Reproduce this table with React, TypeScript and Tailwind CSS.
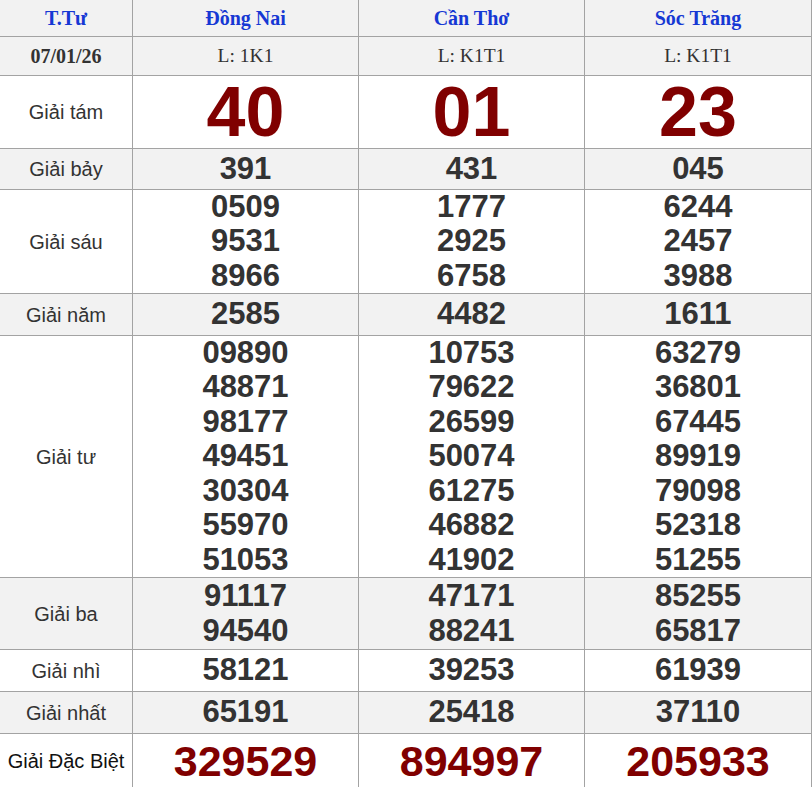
const provinces = [
  { name: 'Đồng Nai', code: 'L: 1K1' },
  { name: 'Cần Thơ', code: 'L: K1T1' },
  { name: 'Sóc Trăng', code: 'L: K1T1' },
]

type Prize = {
  label: string
  values: string[][]
  kind?: 'big' | 'special'
  shaded?: boolean
}

const prizes: Prize[] = [
  { label: 'Giải tám', values: [['40'], ['01'], ['23']], kind: 'big' },
  { label: 'Giải bảy', values: [['391'], ['431'], ['045']], shaded: true },
  {
    label: 'Giải sáu',
    values: [
      ['0509', '9531', '8966'],
      ['1777', '2925', '6758'],
      ['6244', '2457', '3988'],
    ],
  },
  { label: 'Giải năm', values: [['2585'], ['4482'], ['1611']], shaded: true },
  {
    label: 'Giải tư',
    values: [
      ['09890', '48871', '98177', '49451', '30304', '55970', '51053'],
      ['10753', '79622', '26599', '50074', '61275', '46882', '41902'],
      ['63279', '36801', '67445', '89919', '79098', '52318', '51255'],
    ],
  },
  {
    label: 'Giải ba',
    values: [
      ['91117', '94540'],
      ['47171', '88241'],
      ['85255', '65817'],
    ],
    shaded: true,
  },
  { label: 'Giải nhì', values: [['58121'], ['39253'], ['61939']] },
  { label: 'Giải nhất', values: [['65191'], ['25418'], ['37110']], shaded: true },
  {
    label: 'Giải Đặc Biệt',
    values: [['329529'], ['894997'], ['205933']],
    kind: 'special',
  },
]

const sans = "font-['Liberation_Sans',Arial,sans-serif]"
const serif = "font-['Liberation_Serif','Times_New_Roman',serif]"

export default function App() {
  return (
    <div className="w-[812px] bg-white">
      <div className="grid grid-cols-[132px_225px_225px_226px] grid-rows-[36px_38px_72px_40px_103px_41px_241px_71px_41px_41px_54px] gap-px bg-[#a3a3a3] border-r border-[#a3a3a3]">
        <div className={`bg-[#f2f2f2] flex items-center justify-center ${serif} font-bold text-[20px] text-[#1638d4]`}>
          T.Tư
        </div>
        {provinces.map((p) => (
          <div
            key={p.name}
            className={`bg-[#f2f2f2] flex items-center justify-center ${serif} font-bold text-[20px] text-[#1638d4]`}
          >
            {p.name}
          </div>
        ))}

        <div className={`bg-[#f2f2f2] flex items-center justify-center ${serif} font-bold text-[20px] text-[#333]`}>
          07/01/26
        </div>
        {provinces.map((p) => (
          <div
            key={p.name + '-code'}
            className={`bg-[#f2f2f2] flex items-center justify-center ${serif} text-[19.5px] text-[#333]`}
          >
            {p.code}
          </div>
        ))}

        {prizes.map((prize) => {
          const bg = prize.shaded ? 'bg-[#f2f2f2]' : 'bg-white'
          return [
            <div
              key={prize.label}
              className={`${bg} flex items-center justify-center ${sans} text-[20px] ${
                prize.kind === 'special' ? 'text-[#111]' : 'text-[#333]'
              }`}
            >
              {prize.label}
            </div>,
            ...prize.values.map((col, i) => (
              <div
                key={prize.label + i}
                className={`${bg} flex flex-col items-center justify-center ${sans} font-bold`}
              >
                {col.map((v, j) => (
                  <span
                    key={j}
                    className={
                      prize.kind === 'big'
                        ? 'text-[70px] leading-[72px] text-[#800000]'
                        : prize.kind === 'special'
                          ? 'text-[43px] leading-[52px] text-[#800000]'
                          : 'text-[31px] leading-[34.4px] text-[#333]'
                    }
                  >
                    {v}
                  </span>
                ))}
              </div>
            )),
          ]
        })}
      </div>
    </div>
  )
}
